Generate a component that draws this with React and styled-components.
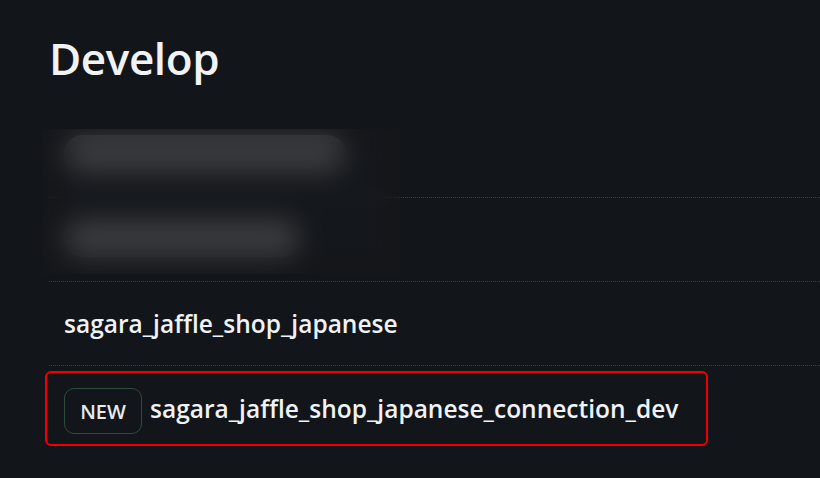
import styled, { createGlobalStyle } from 'styled-components';

const GlobalStyle = createGlobalStyle`
  html, body {
    margin: 0;
    padding: 0;
    background: #121519;
  }
  body {
    font-family: "Open Sans", "Noto Sans", sans-serif;
    color: #f0f3f6;
  }
`;

const projects = [
  { id: 1, redacted: true, barWidth: 282 },
  { id: 2, redacted: true, barWidth: 236 },
  { id: 3, name: 'sagara_jaffle_shop_japanese' },
  { id: 4, name: 'sagara_jaffle_shop_japanese_connection_dev', isNew: true, highlighted: true },
];

const App = () => {
  return (
    <>
      <GlobalStyle />
      <Page>
        <Heading>Develop</Heading>
        <ProjectList>
          <Redaction />
          {projects.map((p) => (
            <Row key={p.id}>
              {p.redacted ? (
                <RedactedBar style={{ width: p.barWidth }} />
              ) : p.highlighted ? (
                <Highlight>
                  {p.isNew && <NewBadge>NEW</NewBadge>}
                  <ProjectName $raised>{p.name}</ProjectName>
                </Highlight>
              ) : (
                <ProjectName>{p.name}</ProjectName>
              )}
            </Row>
          ))}
        </ProjectList>
      </Page>
    </>
  );
};

export default App;

const Page = styled.div`
  width: 820px;
  height: 478px;
  overflow: hidden;
  padding: 28px 0 0 49px;
  box-sizing: border-box;
`;

const Heading = styled.h1`
  margin: 0;
  font-size: 44px;
  font-weight: 600;
  line-height: 60px;
  letter-spacing: -0.4px;
`;

const ProjectList = styled.div`
  position: relative;
  margin-top: 26px;
`;

const Row = styled.div`
  height: 84px;
  box-sizing: border-box;
  display: flex;
  align-items: center;
  padding-left: 15px;
  border-bottom: 1px dotted #3b4048;
  &:last-child {
    border-bottom: none;
  }
`;

const RedactedBar = styled.span`
  height: 38px;
  margin-top: -4px;
  border-radius: 19px;
  background: #37393c;
`;

const Redaction = styled.div`
  position: absolute;
  z-index: 1;
  left: -6px;
  top: 15px;
  width: 357px;
  height: 145px;
  background: rgba(255, 255, 255, 0.012);
  backdrop-filter: blur(13px);
`;

const ProjectName = styled.span`
  font-size: 24.5px;
  font-weight: 600;
  line-height: 34px;
  margin-top: ${({ $raised }) => ($raised ? '4px' : '0')};
`;

const Highlight = styled.div`
  display: flex;
  align-items: flex-start;
  gap: 8px;
  width: 663px;
  height: 75px;
  box-sizing: border-box;
  margin-left: -19px;
  padding: 15px 17px;
  border: 2px solid #f00000;
  border-radius: 6px;
`;

const NewBadge = styled.span`
  display: flex;
  align-items: center;
  justify-content: center;
  width: 78px;
  height: 46px;
  flex-shrink: 0;
  box-sizing: border-box;
  border: 1px solid #2f4c3b;
  border-radius: 10px;
  font-size: 20px;
  font-weight: 600;
  color: #e6eaee;
  padding-top: 2px;
`;
